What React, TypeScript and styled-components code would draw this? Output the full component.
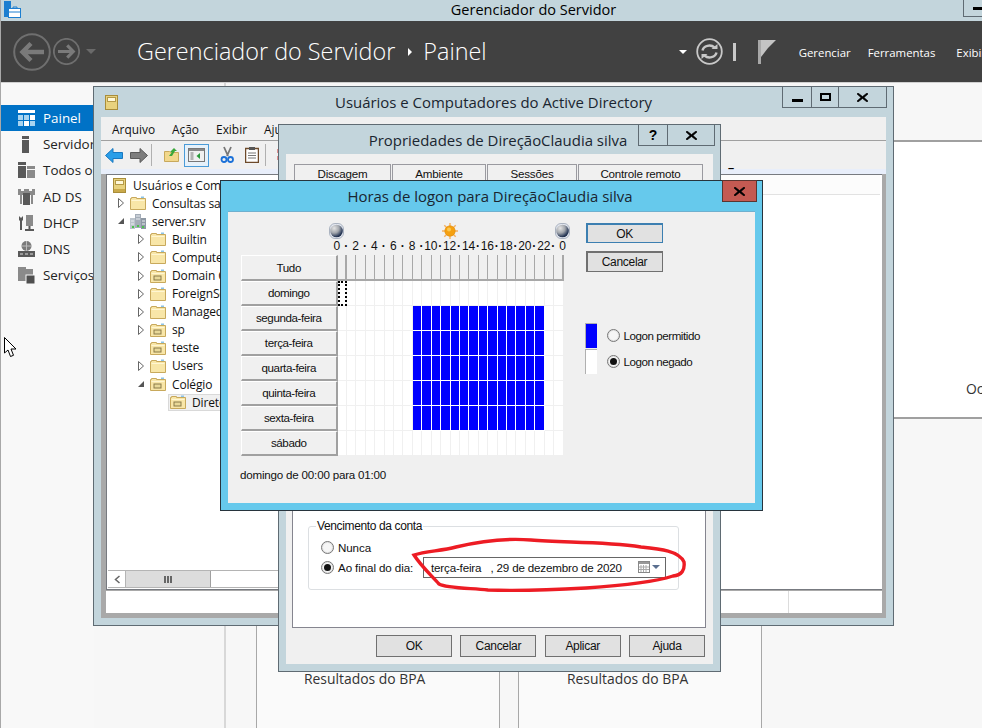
import React from "react";
import styled, { createGlobalStyle } from "styled-components";

const Segoe = `"Open Sans", "Noto Sans", "Liberation Sans", sans-serif`;
const Dialog = `"Liberation Sans", Arial, sans-serif`;
const frame = "#c3d5dc";
const edge = "#5f6b73";

const Global = createGlobalStyle`
  html, body { margin: 0; padding: 0; background: #fff; overflow: hidden; }
  * { box-sizing: border-box; }
`;

const Screen = styled.div`
  position: relative; width: 982px; height: 728px; overflow: hidden;
  display: flex; flex-direction: column; font-family: ${Segoe}; color: #000;
  border-left: 1px solid #a8a8a8;
`;
const TitleStrip = styled.header`
  height: 21px; flex: none; background: ${frame}; display: flex; align-items: center;
  justify-content: center; position: relative; font-size: 14.5px; padding-left: 84px; padding-bottom: 2px;
`;
const AppIcon = styled.svg`position: absolute; left: 2px; top: 1px;`;
const AppMin = styled.div`
  position: absolute; left: 962px; top: 0; width: 40px; height: 17px;
  border-left: 1px solid ${edge}; border-bottom: 1px solid ${edge}; border-top: 0;
  display: flex; align-items: center; padding-left: 9px;
  &::after { content: ""; width: 11px; height: 3px; background: #000; }
`;
const NavBar = styled.nav`
  height: 62px; flex: none; background: #414141; display: flex; align-items: center; color: #fff;
  border-bottom: 1px solid #d0d0d0; padding-left: 12px; white-space: nowrap;
`;
const Crumb = styled.span`font-size: 23.4px; font-weight: 300; padding-bottom: 1px;`;
const NavItem = styled.span`font-size: 11.4px; line-height: 1; position: relative; top: 1px;`;
const NavSpacer = styled.span<{ $w: number }>`display: inline-block; flex: none; width: ${(p) => p.$w}px;`;

const Body = styled.div`flex: 1; display: flex; min-height: 0; background: #f7f7f7;`;
const Sidebar = styled.aside`
  width: 93px; flex: none; padding-top: 22px; background: #f8f8f8; overflow: hidden;
`;
const SideItem = styled.div<{ $active?: boolean }>`
  height: 26.2px; display: flex; align-items: center; gap: 8px; padding-left: 17px; white-space: nowrap;
  font-size: 13.4px; background: ${(p) => (p.$active ? "#0072c6" : "transparent")};
  color: ${(p) => (p.$active ? "#fff" : "#222")};
  svg { flex: none; }
`;
const Rail = styled.div`width: 132px; flex: none; border-right: 2px solid #d8d8d8;`;
const Content = styled.main`flex: 1; min-width: 0; padding-top: 57px; overflow: hidden;`;
const Tile = styled.section`
  height: 279px; background: #fff; border-top: 2px solid #a0a0a0; border-bottom: 2px solid #a0a0a0;
  display: flex; align-items: flex-end; padding: 0 0 19px 740px; font-size: 13.9px; color: #333; white-space: nowrap;
`;
const Cards = styled.div`display: flex; gap: 18px; padding: 40px 0 0 30px;`;
const Card = styled.article`
  width: 244px; height: 320px; background: #fafafa; border: 1px solid #a8a8a8; padding: 209px 0 0 47px;
  font-size: 13.9px; color: #333; white-space: nowrap;
  & + & { padding-left: 48px; }
`;

const Win = styled.section<{ $x: number; $y: number; $w: number; $h: number; $accent?: boolean }>`
  position: absolute; left: ${(p) => p.$x - 1}px; top: ${(p) => p.$y}px; width: ${(p) => p.$w}px; height: ${(p) => p.$h}px;
  display: flex; flex-direction: column; padding: 0 7px 7px;
  background: ${(p) => (p.$accent ? "#66c9ec" : frame)};
  border: 1px solid ${(p) => (p.$accent ? "#27343d" : edge)};
`;
const WinTitle = styled.div<{ $h: number; $shift?: number }>`
  height: ${(p) => p.$h}px; flex: none; display: flex; align-items: center; justify-content: center;
  font-size: 14.95px; color: #1a2530; padding-right: ${(p) => p.$shift ?? 0}px; white-space: nowrap;
`;
const WinIcon = styled.svg`position: absolute; left: 11px; top: 8px;`;
const Controls = styled.div<{ $right: number; $tone?: string }>`
  position: absolute; right: ${(p) => p.$right}px; top: -1px; display: flex; height: 22px;
  border: 1px solid ${(p) => p.$tone ?? edge};
`;
const Ctl = styled.div<{ $w: number; $danger?: boolean }>`
  width: ${(p) => p.$w}px; display: flex; align-items: center; justify-content: center;
  background: ${(p) => (p.$danger ? "#c45a52" : frame)};
  font: bold 14px ${Dialog}; color: #000;
  & + & { border-left: 1px solid ${edge}; }
`;
const MinGlyph = styled.i`display: block; width: 11px; height: 3px; background: #000; margin-top: 6px;`;
const MaxGlyph = styled.i`display: block; width: 11px; height: 8px; border: 2px solid #000;`;

const Client = styled.div`flex: 1; min-height: 0; display: flex; flex-direction: column; background: #f0f0f0;`;
const MenuBar = styled.div`
  height: 24px; flex: none; display: flex; align-items: center; border-bottom: 1px solid #a0a0a0;
  padding-left: 11px; gap: 17px; font-size: 11.9px; color: #111;
`;
const Toolbar = styled.div`height: 28px; flex: none; display: flex; align-items: center; padding-left: 4px; position: relative;`;
const ToolGap = styled.span<{ $w: number }>`flex: none; width: ${(p) => p.$w}px;`;
const ToolSep = styled.span`flex: none; width: 1px; height: 22px; background: #b0b0b0;`;
const ToolActive = styled.span`
  flex: none; width: 25px; height: 23px; border: 1px solid #4a9bd8; background: #e6f1fa;
  display: flex; align-items: center; justify-content: center;
`;
const Mdi = styled.div`
  flex: 1; min-height: 0; display: flex; flex-direction: column; background: #a9a9a9;
  border-top: 5px solid #e8eefa; padding: 0 4px 5px 5px;
`;
const Pane = styled.div`flex: 1; min-height: 0; background: #fff; border: 1px solid #777a80; border-right: 0; display: flex;`;
const TreeCol = styled.div`width: 260px; flex: none; display: flex; flex-direction: column;`;
const Tree = styled.ul`
  flex: 1; list-style: none; margin: 0; padding: 1px 0 0; font-size: 11.5px; color: #111; overflow: hidden;
`;
const RootRow = styled.li`
  height: 18.1px; display: flex; align-items: center; padding-left: 6px; gap: 7px; white-space: nowrap; font-size: 12px;
`;
const TreeRow = styled.li<{ $level: number }>`
  height: 18.1px; display: flex; align-items: center; padding-left: ${(p) => 11 + p.$level * 20}px; gap: 6px; white-space: nowrap; font-size: 12px;
`;
const TreeLabel = styled.span`letter-spacing: -0.15px;`;
const TreeSel = styled.span`
  display: flex; align-items: center; gap: 6px; background: #f0f0f0; border: 1px solid #d9d9d9; padding-left: 1px; height: 17px; width: 100%;
`;
const Exp = styled.svg`flex: none;`;
const HScroll = styled.div`
  height: 18px; flex: none; display: flex; margin: 0 0 1px 1px; border-top: 1px solid #b4b4b4; border-bottom: 1px solid #b4b4b4; background: #fff;
`;
const ScrollBtn = styled.span`
  width: 17px; flex: none; margin-left: 1px; border-right: 1px solid #b4b4b4; display: flex; align-items: center; justify-content: center; background:#fff;
`;
const ScrollThumb = styled.span`
  width: 85px; flex: none; background: #dcdcdc; border-right: 1px solid #a0a0a0; display: flex; align-items: center; justify-content: center; gap: 1px;
  i { display: block; width: 2px; height: 7px; background: #666; }
`;
const ListCol = styled.div`flex: 1; min-width: 0;`;
const ListHead = styled.div`height: 20px; background: #fcfcfc; border-bottom: 1px solid #e2e2e2; margin-right: 2px;`;
const StatusBar = styled.div`height: 22px; flex: none; background: #fff; display: flex; margin-top: 1px;`;
const StatusCell = styled.div`width: 683px; border-right: 1px solid #dcdcdc;`;

const Tabs = styled.div`display: flex; padding: 10px 0 0 8px; gap: 1px; flex: none;`;
const Tab = styled.div<{ $w: number }>`
  width: ${(p) => p.$w}px; height: 20px; border: 1px solid #9a9aa0; border-bottom: 0; background: #f0f0f0;
  font: 11.6px/17px ${Dialog}; letter-spacing: -0.2px; text-align: center; color: #111;
`;
const TabPanel = styled.div`
  flex: 1; min-height: 0; margin-left: 6px; width: 414px; background: #fff; border: 1px solid #85858f;
  display: flex; flex-direction: column; justify-content: flex-end; padding: 0 0 37px 15px;
`;
const Group = styled.fieldset`
  margin: 0; width: 371px; border: 1px solid #dcdfe2; border-radius: 3px; padding: 4px 0 12px 12px; font: 11.6px ${Dialog}; color: #111;
  legend { padding: 0 1px; margin-left: -5px; line-height: 14px; font-size: 12px; letter-spacing: -0.37px; }
`;
const RadioRow = styled.div`height: 20px; display: flex; align-items: center; white-space: pre;`;
const RadioMark = styled.span<{ $on?: boolean }>`
  flex: none; width: 13px; height: 13px; border-radius: 50%; border: 1px solid #767676; background: #f6f6f6;
  display: flex; align-items: center; justify-content: center; margin-right: 4px; box-shadow: inset 0 0 0 1px #e2e2e2;
  &::after { content: ""; width: 7px; height: 7px; border-radius: 50%; background: ${(p) => (p.$on ? "#111" : "transparent")}; }
`;
const RadioCaption = styled.span<{ $w?: number }>`width: ${(p) => (p.$w ? `${p.$w}px` : "auto")}; flex: none; letter-spacing: -0.1px;`;
const DateField = styled.div`
  width: 243px; height: 21px; flex: none; border: 1px solid #666; background: #fff; display: flex; align-items: center;
  padding-left: 7px; font-size: 11.6px; letter-spacing: -0.17px; white-space: pre;
`;
const DateIcons = styled.span`margin-left: auto; margin-right: 5px; display: flex; align-items: center; gap: 2px;`;
const Footer = styled.div`flex: none; display: flex; justify-content: flex-end; gap: 8.34px; padding: 7px 8px 7px 0;`;
const Btn = styled.div<{ $w?: number; $h?: number; $primary?: boolean; $thick?: boolean }>`
  width: ${(p) => p.$w ?? 76}px; height: ${(p) => p.$h ?? 22}px; background: #e1e1e1; display: flex; align-items: center; justify-content: center;
  font: 12px ${Dialog}; letter-spacing: -0.3px; color: #111;
  border: 1px solid ${(p) => (p.$primary ? "#3c7fb1" : "#707070")};
  border-left-width: ${(p) => (p.$thick || p.$primary ? 2 : 1)}px;
  border-top-width: ${(p) => (p.$primary ? 2 : 1)}px;
  ${(p) => (p.$thick ? "border-top-width: 2px;" : "")}
`;

const HoursBody = styled.div`
  flex: 1; min-height: 0; background: #f0f0f0; display: flex; padding-left: 13px; gap: 22px;
  border-top: 1px solid #6fb0cf; font-family: ${Dialog}; font-size: 11.6px; color: #111;
`;
const HoursLeft = styled.div`width: 322.5px; flex: none;`;
const SkyRow = styled.div`display: flex; justify-content: space-between; align-items: center; height: 16px; margin: 11px 0 0 88px; width: 241px;`;
const Scale = styled.div`
  display: grid; grid-template-columns: repeat(25, 9.417px); margin: 0 0 0 91px; height: 16px; font-size: 12px; line-height: 15px;
`;
const Tick = styled.span<{ $dot?: boolean }>`
  display: flex; justify-content: center; white-space: nowrap; letter-spacing: -0.2px; width: 9.417px;
  font-weight: ${(p) => (p.$dot ? 700 : 400)};
`;
const Matrix = styled.div`display: grid; grid-template-columns: 96.5px 226px; grid-template-rows: 26px repeat(7, 25px);`;
const DayBtn = styled.div`
  background: #f0f0f0; border: 1px solid #fff; border-right: 2px solid #a0a0a0; border-bottom: 2px solid #a0a0a0;
  display: flex; align-items: center; justify-content: center; font-size: 11.6px; letter-spacing: -0.4px; padding-bottom: 1px;
`;
const Slots = styled.div`display: grid; grid-template-columns: repeat(24, 1fr);`;
const HeadSlot = styled.div<{ $heavy?: boolean }>`
  background: #f0f0f0; border-right: ${(p) => (p.$heavy ? 2 : 1)}px solid #a8a8a8; border-bottom: 2px solid #a8a8a8;
`;
const Slot = styled.div<{ $on?: boolean; $focus?: boolean }>`
  position: relative;
  background: ${(p) => (p.$on ? "#0000ff" : "#fff")};
  border-right: 1px solid ${(p) => (p.$on ? "#fff" : "#f0f0f0")};
  border-bottom: 1px solid ${(p) => (p.$on ? "#fff" : "#f0f0f0")};
  ${(p) => (p.$focus ? "outline: 2px dotted #000; outline-offset: -2px;" : "")}
`;
const StatusLine = styled.div`margin: 11px 0 0 -1px; height: 16px; line-height: 16px; font-size: 11.6px; letter-spacing: -0.2px;`;
const HoursRight = styled.div`flex: none; padding-top: 11px; display: flex; flex-direction: column; gap: 8px; align-items: flex-start;`;
const Legend = styled.div`margin: 43px 0 0 -1px; display: flex; gap: 10px;`;
const Swatches = styled.div`display: flex; flex-direction: column; width: 12px; gap: 1px;`;
const Swatch = styled.span<{ $on?: boolean }>`
  height: 25px; background: ${(p) => (p.$on ? "#0000ff" : "#fff")};
  border-left: 1px solid #b0b0b0; border-top: 1px solid #b0b0b0;
`;
const LegendList = styled.div`display: flex; flex-direction: column; gap: 6px; font-size: 11.6px; letter-spacing: -0.45px; margin-top: 2px;`;
const Scribble = styled.svg`position: absolute; left: 0; top: 0; pointer-events: none;`;
const Tail = styled.span`position: absolute; left: 727px; top: 163px; font: bold 11px ${Dialog}; line-height: 1;`;

const Folder = ({ ou }: { ou?: boolean }) => (
  <svg width="16" height="14" viewBox="0 0 16 14" style={{ flex: "none" }}>
    <path d="M.5 13.500V2.500h1V1.500h5v1h9v11z" fill="#f8e6a8" stroke="#c8a95c" />
    <rect x="1.500" y="4" width="13" height="1" fill="#fff6d2" />
    <rect x="11" y="0.500" width="3" height="1.500" fill="#8cc4e8" />
    {ou && <rect x="4" y="7" width="7" height="4" fill="#e8d898" stroke="#8a7a48" strokeWidth="1" />}
  </svg>
);
const RootIcon = () => (
  <svg width="13" height="15" viewBox="0 0 13 15" style={{ flex: "none" }}>
    <rect x=".5" y=".5" width="12" height="14" fill="#e8d27e" stroke="#a98d3a" />
    <rect x="2.500" y="2.500" width="8" height="4" fill="#fff8d8" stroke="#b59a48" />
    <rect x="1" y="11" width="11" height="3" fill="#c9a94a" />
  </svg>
);
const ServerIcon = () => (
  <svg width="16" height="15" viewBox="0 0 16 15" style={{ flex: "none" }}>
    <rect x="5" y="0" width="6" height="14" fill="#a4adb8" />
    <rect x="0" y="4" width="5" height="11" fill="#bcc4cc" />
    <rect x="11" y="4" width="5" height="11" fill="#8e98a4" />
    <path d="M6 2h4M6 5h4M1 7h3M12 7h3M1 10h3M12 10h3" stroke="#e8ecf0" />
    <rect x="2" y="12" width="2" height="2" fill="#4cc34c" />
    <rect x="7" y="11" width="2" height="2" fill="#4cc34c" />
    <rect x="12" y="12" width="2" height="2" fill="#4cc34c" />
  </svg>
);
const Caret = ({ open }: { open?: boolean }) => (
  <Exp width="6" height="10" viewBox="0 0 6 10">
    {open ? <path d="M0 8 L6 2 V8Z" fill="#555" /> : <path d="M.5.5 L5.500 5 L.5 9.500Z" fill="#fff" stroke="#666" />}
  </Exp>
);
const NoCaret = styled.span`width: 6px; flex: none;`;

const Moon = () => (
  <svg width="15" height="16" viewBox="0 0 15 16">
    <defs>
      <radialGradient id="mg" cx=".32" cy=".28" r=".85">
        <stop offset="0" stopColor="#e4e4e4" /><stop offset=".45" stopColor="#a2a6ac" /><stop offset=".8" stopColor="#2a3a58" /><stop offset="1" stopColor="#101c36" />
      </radialGradient>
    </defs>
    <rect x=".5" y=".5" width="14" height="15" rx="5.500" fill="#e4e8f0" stroke="#9aa4b4" strokeWidth=".8" />
    <circle cx="7.500" cy="8" r="6.300" fill="url(#mg)" />
  </svg>
);
const Sun = () => (
  <svg width="16" height="16" viewBox="0 0 16 16">
    <g stroke="#f4b060" strokeWidth="1.400">
      <path d="M8 0v16M0 8h16M2.300 2.300l11.400 11.400M13.700 2.300L2.300 13.700" />
    </g>
    <circle cx="8" cy="8" r="5.200" fill="#f5a010" stroke="#e08a00" strokeWidth=".6" />
    <circle cx="7" cy="6.500" r="2" fill="#fcc850" />
  </svg>
);

const CircleArrow = ({ d, dir }: { d: number; dir: "l" | "r" }) => (
  <svg width={d} height={d} viewBox="0 0 38 38" style={{ flex: "none" }}>
    <circle cx="19" cy="19" r="17.800" fill="none" stroke="#6f6f6f" strokeWidth={d > 30 ? 2 : 2.6} />
    <path
      d={dir === "l" ? "M31 19H10M18 10.500L9.500 19l8.500 8.500" : "M7 19h21M20 10.500l8.500 8.500-8.500 8.500"}
      fill="none" stroke="#7a7a7a" strokeWidth="4.400"
    />
  </svg>
);

const Tri = styled.i<{ $c: string; $s?: number }>`
  display: block; flex: none; width: 0; height: 0;
  border-left: ${(p) => p.$s ?? 5}px solid transparent; border-right: ${(p) => p.$s ?? 5}px solid transparent;
  border-top: ${(p) => p.$s ?? 5}px solid ${(p) => p.$c};
`;
const TriRight = styled.i`
  display: block; flex: none; width: 0; height: 0;
  border-top: 4px solid transparent; border-bottom: 4px solid transparent; border-left: 4px solid #fff;
`;

const sideIcons: Record<string, React.ReactNode> = {
  painel: (
    <svg width="17" height="16" viewBox="0 0 17 16" style={{ flex: "none" }}>
      <rect width="17" height="3" fill="#fff" />
      <g fill="#a8d4f0"><rect y="5" width="5" height="5" /><rect x="6" y="5" width="5" height="5" /><rect x="12" y="5" width="5" height="5" fill="#fff" /><rect y="11" width="5" height="5" /><rect x="6" y="11" width="5" height="5" fill="#fff" /><rect x="12" y="11" width="5" height="5" /></g>
    </svg>
  ),
  local: (
    <svg width="17" height="17" viewBox="0 0 17 17" style={{ flex: "none" }}>
      <rect x="4" y="0" width="7" height="3" fill="#595959" /><rect x="4" y="4" width="7" height="13" fill="#595959" />
    </svg>
  ),
  todos: (
    <svg width="17" height="16" viewBox="0 0 17 16" style={{ flex: "none" }}>
      <rect width="8" height="3" fill="#595959" /><rect y="4" width="8" height="12" fill="#595959" />
      <rect x="9" y="4" width="8" height="3" fill="#8a8a8a" /><rect x="9" y="8" width="8" height="8" fill="#8a8a8a" />
    </svg>
  ),
  adds: (
    <svg width="17" height="16" viewBox="0 0 17 16" style={{ flex: "none" }}>
      <path d="M0 0h3v2h3V0h5v2h3V0h3v6h-2v9h-2V6h-9v9H2V6H0z" fill="#8a8a8a" /><rect x="5" y="4" width="7" height="12" fill="#595959" />
    </svg>
  ),
  dhcp: (
    <svg width="17" height="16" viewBox="0 0 17 16" style={{ flex: "none" }}>
      <path d="M1 1l2 2 2-2v4l-1 1v9H2V6L1 5z" fill="#595959" /><rect x="8" y="0" width="7" height="11" fill="#8a8a8a" /><rect x="10.500" y="11" width="2" height="3" fill="#595959" /><rect x="7" y="14" width="9" height="2" fill="#595959" />
    </svg>
  ),
  dns: (
    <svg width="17" height="16" viewBox="0 0 17 16" style={{ flex: "none" }}>
      <circle cx="8.500" cy="5" r="5" fill="#7a7a7a" /><path d="M3.500 5h10M8.500 0v10" stroke="#bbb" /><rect y="10" width="17" height="6" fill="#595959" /><path d="M2 13h3M7 13h3M12 13h3" stroke="#ddd" />
    </svg>
  ),
  arquivo: (
    <svg width="17" height="17" viewBox="0 0 17 17" style={{ flex: "none" }}>
      <path d="M0 0h8v2h7v12H0z" fill="#8a8a8a" /><rect x="8" y="8" width="9" height="9" fill="#4f4f4f" stroke="#f8f8f8" />
    </svg>
  ),
};

const treeRows: { t: string; l: number; k: "f" | "o" | "s"; c: "c" | "o" | "n"; sel?: boolean }[] = [
  { t: "Consultas salvas", l: 0, k: "f", c: "c" },
  { t: "server.srv", l: 0, k: "s", c: "o" },
  { t: "Builtin", l: 1, k: "f", c: "c" },
  { t: "Computers", l: 1, k: "f", c: "c" },
  { t: "Domain Controllers", l: 1, k: "o", c: "c" },
  { t: "ForeignSecurityPrincipals", l: 1, k: "f", c: "c" },
  { t: "Managed Service Accounts", l: 1, k: "f", c: "c" },
  { t: "sp", l: 1, k: "o", c: "c" },
  { t: "teste", l: 1, k: "o", c: "n" },
  { t: "Users", l: 1, k: "f", c: "c" },
  { t: "Colégio", l: 1, k: "o", c: "o" },
  { t: "Diretoria", l: 2.5, k: "o", c: "n", sel: true },
];

const days = ["domingo", "segunda-feira", "terça-feira", "quarta-feira", "quinta-feira", "sexta-feira", "sábado"];
const hours = Array.from({ length: 24 }, (_, i) => i);
const ticks = Array.from({ length: 25 }, (_, i) => (i === 24 ? "0" : i % 2 === 0 ? String(i) : "·"));

const XGlyph = () => (
  <svg width="11" height="9" viewBox="0 0 11 9"><path d="M1 0l4.500 3.500L10 0l1 1-4 3.500 4 3.500-1 1-4.500-3.500L1 9 0 8l4-3.500L0 1z" fill="#000" stroke="#000" strokeWidth=".6" /></svg>
);

export default function App() {
  return (
    <Screen>
      <Global />
      <TitleStrip>
        <AppIcon width="18" height="17" viewBox="0 0 18 17">
          <rect x="1" y="0" width="7" height="8" fill="#1c7ed0" /><rect x="1" y="8" width="4" height="8" fill="#1c7ed0" />
          <rect x="5.500" y="7.500" width="12" height="9" fill="#fff" stroke="#1c7ed0" /><path d="M6 11h11M10 7.500V6h4v1.500" stroke="#1c7ed0" fill="none" />
        </AppIcon>
        Gerenciador do Servidor
        <AppMin />
      </TitleStrip>
      <NavBar>
        <CircleArrow d={38} dir="l" />
        <NavSpacer $w={2} />
        <CircleArrow d={27} dir="r" />
        <NavSpacer $w={6} />
        <Tri $c="#6a6a6a" />
        <NavSpacer $w={41} />
        <Crumb>Gerenciador do Servidor</Crumb>
        <NavSpacer $w={13} />
        <TriRight />
        <NavSpacer $w={11} />
        <Crumb>Painel</Crumb>
        <NavSpacer $w={192} />
        <Tri $c="#fff" $s={4} />
        <NavSpacer $w={9} />
        <svg width="27" height="27" viewBox="0 0 27 27" style={{ flex: "none" }}>
          <circle cx="13.500" cy="13.500" r="12.300" fill="none" stroke="#c8c8c8" strokeWidth="1.800" />
          <path d="M6.500 12.500a7 6 0 0 1 12-3M20.500 14.500a7 6 0 0 1-12 3" fill="none" stroke="#c8c8c8" strokeWidth="2.400" />
          <path d="M15.500 11h6V6zM11.500 16h-6v5z" fill="#c8c8c8" />
        </svg>
        <NavSpacer $w={10} />
        <svg width="3" height="18" style={{ flex: "none" }}><rect width="3" height="18" fill="#c8c8c8" /></svg>
        <NavSpacer $w={22} />
        <svg width="18" height="24" viewBox="0 0 18 24" style={{ flex: "none" }}>
          <rect width="3" height="24" fill="#a8a8a8" /><path d="M3 0h15L10 8l-7 9z" fill="#c4c4c4" />
        </svg>
        <NavSpacer $w={23} />
        <NavItem>Gerenciar</NavItem>
        <NavSpacer $w={17} />
        <NavItem>Ferramentas</NavItem>
        <NavSpacer $w={21} />
        <NavItem>Exibir</NavItem>
      </NavBar>
      <Body>
        <Sidebar>
          <SideItem $active>{sideIcons.painel}Painel</SideItem>
          <SideItem>{sideIcons.local}Servidor Local</SideItem>
          <SideItem>{sideIcons.todos}Todos os Servidores</SideItem>
          <SideItem>{sideIcons.adds}AD DS</SideItem>
          <SideItem>{sideIcons.dhcp}DHCP</SideItem>
          <SideItem>{sideIcons.dns}DNS</SideItem>
          <SideItem>{sideIcons.arquivo}Serviços de Arquivo</SideItem>
        </Sidebar>
        <Rail />
        <Content>
          <Tile>Ocultar</Tile>
          <Cards>
            <Card>Resultados do BPA</Card>
            <Card>Resultados do BPA</Card>
          </Cards>
        </Content>
      </Body>

      <Win $x={93} $y={86} $w={801} $h={540}>
        <WinIcon width="13" height="15" viewBox="0 0 13 15">
          <rect x=".5" y=".5" width="12" height="14" fill="#e8d27e" stroke="#a98d3a" />
          <rect x="2.500" y="2.500" width="8" height="4" fill="#fff8d8" stroke="#b59a48" />
        </WinIcon>
        <WinTitle $h={30}>Usuários e Computadores do Active Directory</WinTitle>
        <Controls $right={6}>
          <Ctl $w={28}><MinGlyph /></Ctl>
          <Ctl $w={27}><MaxGlyph /></Ctl>
          <Ctl $w={48}><XGlyph /></Ctl>
        </Controls>
        <Client>
          <MenuBar><span>Arquivo</span><span>Ação</span><span>Exibir</span><span>Ajuda</span></MenuBar>
          <Toolbar>
            <svg width="18" height="15" viewBox="0 0 18 15" style={{ flex: "none" }}>
              <path d="M8 .5L.5 7.500 8 14.500V10.500h9.500v-6H8z" fill="#2a9ee8" stroke="#1a78c0" />
            </svg>
            <ToolGap $w={7} />
            <svg width="18" height="15" viewBox="0 0 18 15" style={{ flex: "none" }}>
              <path d="M10 .5L17.500 7.500 10 14.500V10.500H.5v-6H10z" fill="#7d7d7d" stroke="#5a5a5a" />
            </svg>
            <ToolGap $w={3} />
            <ToolSep />
            <ToolGap $w={12} />
            <svg width="15" height="14" viewBox="0 0 15 14" style={{ flex: "none" }}>
              <path d="M.5 13.500V3.500h5l1 1h8v9z" fill="#f2d88c" stroke="#c8a95c" /><path d="M5 8l3-4-2 0 4-4 3 3-2 0-3 5z" fill="#3aa83a" />
            </svg>
            <ToolGap $w={5} />
            <ToolActive>
              <svg width="17" height="14" viewBox="0 0 17 14">
                <rect x=".5" y=".5" width="16" height="13" fill="#f0f0f0" stroke="#777" /><rect x="1" y="1" width="15" height="2" fill="#888" />
                <path d="M2.500 5h3M2.500 7h3M2.500 9h3M2.500 11h3" stroke="#777" /><path d="M12 5v6L8.500 8z" fill="#2a9a3a" />
              </svg>
            </ToolActive>
            <ToolGap $w={11} />
            <svg width="15" height="18" viewBox="0 0 15 18" style={{ flex: "none" }}>
              <path d="M4 1l4 9M11 1L7 10" stroke="#777" strokeWidth="1.800" /><circle cx="4" cy="13.500" r="2.500" fill="none" stroke="#1a70d8" strokeWidth="1.800" /><circle cx="10.500" cy="13.500" r="2.500" fill="none" stroke="#1a70d8" strokeWidth="1.800" />
            </svg>
            <ToolGap $w={10} />
            <svg width="14" height="16" viewBox="0 0 14 16" style={{ flex: "none" }}>
              <rect x=".5" y="1.500" width="13" height="14" fill="#fff" stroke="#6d4a2a" strokeWidth="1.500" /><rect x="4" y="0" width="6" height="3" fill="#555" /><path d="M3 6h8M3 8.500h8M3 11h8" stroke="#777" />
            </svg>
            <ToolGap $w={6} />
            <ToolSep />
            <ToolGap $w={10} />
            <svg width="6" height="16" style={{ flex: "none" }}><path d="M3 2v12" stroke="#d03030" strokeWidth="3" strokeDasharray="4 3" /></svg>
          </Toolbar>
          <Mdi>
            <Pane>
              <TreeCol>
                <Tree>
                  <RootRow><RootIcon /><span>Usuários e Computadores do Active Directory</span></RootRow>
                  {treeRows.map((r) => (
                    <TreeRow key={r.t} $level={r.l}>
                      {r.sel ? (
                        <TreeSel>
                          <Folder ou />
                          <TreeLabel>{r.t}</TreeLabel>
                        </TreeSel>
                      ) : (
                        <>
                          {r.c === "n" ? <NoCaret /> : <Caret open={r.c === "o"} />}
                          {r.k === "s" ? <ServerIcon /> : <Folder ou={r.k === "o"} />}
                          <TreeLabel>{r.t}</TreeLabel>
                        </>
                      )}
                    </TreeRow>
                  ))}
                </Tree>
                <HScroll>
                  <ScrollBtn>
                    <svg width="7" height="9" viewBox="0 0 7 9"><path d="M5.500 1L1.500 4.500 5.500 8" fill="none" stroke="#666" strokeWidth="1.500" /></svg>
                  </ScrollBtn>
                  <ScrollThumb><i /><i /><i /></ScrollThumb>
                </HScroll>
              </TreeCol>
              <ListCol><ListHead /></ListCol>
            </Pane>
            <StatusBar><StatusCell /></StatusBar>
          </Mdi>
        </Client>
      </Win>

      <Win $x={278} $y={124} $w={443} $h={548}>
        <WinTitle $h={29} $shift={3}>Propriedades de DireçãoClaudia silva</WinTitle>
        <Controls $right={5}>
          <Ctl $w={28}>?</Ctl>
          <Ctl $w={47}><XGlyph /></Ctl>
        </Controls>
        <Client>
          <Tabs>
            <Tab $w={97}>Discagem</Tab>
            <Tab $w={94}>Ambiente</Tab>
            <Tab $w={90}>Sessões</Tab>
            <Tab $w={125}>Controle remoto</Tab>
          </Tabs>
          <TabPanel>
            <Group>
              <legend>Vencimento da conta</legend>
              <RadioRow><RadioMark /><RadioCaption>Nunca</RadioCaption></RadioRow>
              <RadioRow>
                <RadioMark $on />
                <RadioCaption $w={85}>Ao final do dia:</RadioCaption>
                <DateField>
                  {"terça-feira   , 29 de dezembro de 2020"}
                  <DateIcons>
                    <svg width="12" height="12" viewBox="0 0 12 12">
                      <rect x=".5" y=".5" width="11" height="11" fill="#fff" stroke="#888" /><rect x="1" y="1" width="10" height="2" fill="#999" />
                      <path d="M3 4v7M5.500 4v7M8 4v7M1 6h10M1 8.500h10" stroke="#aaa" />
                    </svg>
                    <Tri $c="#5a6f8f" $s={4} />
                  </DateIcons>
                </DateField>
              </RadioRow>
            </Group>
          </TabPanel>
          <Footer>
            <Btn>OK</Btn>
            <Btn>Cancelar</Btn>
            <Btn>Aplicar</Btn>
            <Btn>Ajuda</Btn>
          </Footer>
        </Client>
      </Win>

      <Win $x={220} $y={180} $w={543} $h={331} $accent>
        <WinTitle $h={30} $shift={3}>Horas de logon para DireçãoClaudia silva</WinTitle>
        <Controls $right={5} $tone="#5a3530">
          <Ctl $w={33} $danger><XGlyph /></Ctl>
        </Controls>
        <HoursBody>
          <HoursLeft>
            <SkyRow><Moon /><Sun /><Moon /></SkyRow>
            <Scale>{ticks.map((t, i) => <Tick key={i} $dot={t === "·"}>{t}</Tick>)}</Scale>
            <Matrix>
              <DayBtn>Tudo</DayBtn>
              <Slots>{hours.map((h) => <HeadSlot key={h} $heavy={h === 0 || h === 23} />)}</Slots>
              {days.map((d, di) => (
                <React.Fragment key={d}>
                  <DayBtn>{d}</DayBtn>
                  <Slots>
                    {hours.map((h) => (
                      <Slot key={h} $on={di >= 1 && di <= 5 && h >= 8 && h <= 21} $focus={di === 0 && h === 0} />
                    ))}
                  </Slots>
                </React.Fragment>
              ))}
            </Matrix>
            <StatusLine>domingo de 00:00 para 01:00</StatusLine>
          </HoursLeft>
          <HoursRight>
            <Btn $w={77} $h={20} $primary>OK</Btn>
            <Btn $w={77} $h={21} $thick>Cancelar</Btn>
            <Legend>
              <Swatches><Swatch $on /><Swatch /></Swatches>
              <LegendList>
                <RadioRow><RadioMark />Logon permitido</RadioRow>
                <RadioRow><RadioMark $on />Logon negado</RadioRow>
              </LegendList>
            </Legend>
          </HoursRight>
        </HoursBody>
      </Win>

      <Tail>–</Tail>

      <Scribble width="982" height="728" viewBox="0 0 982 728">
        <path
          d="M413 555 C 425 551 440 551 455 547 C 480 541 505 538 530 540 C 560 543 600 541 640 547 C 660 549 678 551 683 562 C 684 570 681 575 672 576 C 650 583 615 586 585 588 C 550 590 515 591 487 590 C 465 588 445 588 438 584 C 430 575 420 566 413 555 Z"
          fill="none" stroke="#ed1c24" strokeWidth="3.400"
        />
      </Scribble>
      <Scribble width="982" height="728" viewBox="0 0 982 728">
        <path d="M3.500 337.500V353l3.500-3 2.500 6.500 3-1.200-2.500-6.300h5z" fill="#fff" stroke="#000" />
      </Scribble>
    </Screen>
  );
}
